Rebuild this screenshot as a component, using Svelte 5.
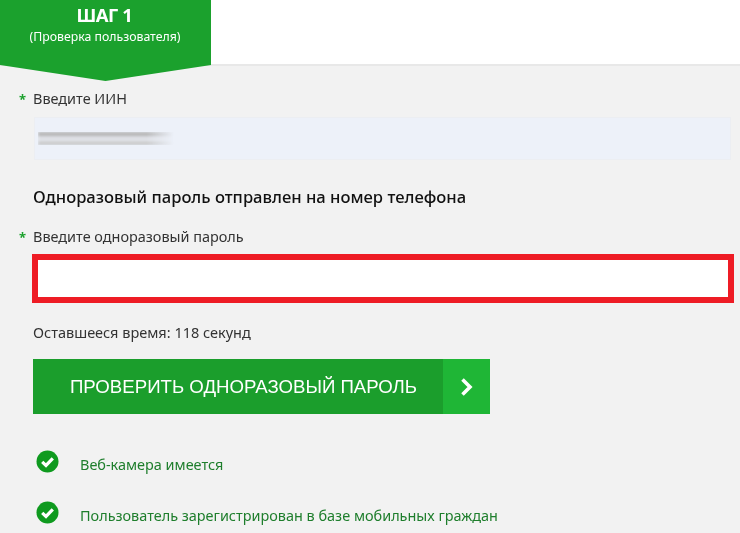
<script>
  const checks = ['Веб-камера имеется', 'Пользователь зарегистрирован в базе мобильных граждан'];
</script>

<div class="page">
  <header class="top">
    <div class="tab">
      <div class="step">ШАГ 1</div>
      <div class="sub">(Проверка пользователя)</div>
    </div>
  </header>

  <main class="form">
    <label class="label first"><span class="star">*</span>Введите ИИН</label>
    <div class="iin"><span class="smear"></span></div>

    <h2 class="notice">Одноразовый пароль отправлен на номер телефона</h2>

    <label class="label"><span class="star">*</span>Введите одноразовый пароль</label>
    <input class="otp" type="text" />

    <p class="time">Оставшееся время: 118 секунд</p>

    <button class="btn" type="button">
      <span class="btn-text">ПРОВЕРИТЬ ОДНОРАЗОВЫЙ ПАРОЛЬ</span>
      <span class="btn-arrow">
        <svg width="14" height="20" viewBox="0 0 14 20"><path d="M2.5 2.5 10 10 2.5 17.5" fill="none" stroke="#fff" stroke-width="3.6"/></svg>
      </span>
    </button>

    <ul class="checks">
      {#each checks as c}
        <li>
          <svg class="ok" width="23" height="23" viewBox="0 0 23 23">
            <circle cx="11.5" cy="11.5" r="11" fill="#0f9a1f"/>
            <path d="M6.2 11.8 10 15.4 16.8 8.4" fill="none" stroke="#fff" stroke-width="3.2"/>
          </svg>
          <span>{c}</span>
        </li>
      {/each}
    </ul>
  </main>
</div>

<style>
  :global(body) { margin: 0; background: #f2f2f2; }
  .page {
    width: 740px; height: 533px; overflow: hidden; background: #f2f2f2;
    font-family: "Noto Sans", "Open Sans", sans-serif; color: #333;
    filter: blur(0.3px);
  }
  .top { height: 64px; background: #fff; border-bottom: 2px solid #e8e8e8; }
  .tab {
    position: relative; width: 211px; height: 65px; background: #1ba12d; color: #fff;
    text-align: center; box-sizing: border-box;
  }
  .tab::after {
    content: ""; position: absolute; left: 0; top: 65px; width: 211px; height: 16px;
    background: #1ba12d; clip-path: polygon(0 0, 100% 0, 50% 100%);
  }
  .step { font-size: 18.5px; font-weight: 700; line-height: 22px; padding-top: 4px; padding-right: 2px; letter-spacing: -0.5px; }
  .sub { font-size: 12.3px; line-height: 16px; padding-top: 3px; padding-right: 1px; }
  .form { padding: 0 10px 0 33px; }
  .label { display: block; position: relative; font-size: 14.45px; line-height: 18px; color: #333; }
  .label.first { padding-top: 24px; }
  .star { position: absolute; left: -14px; color: #1ba12d; font-size: 13px; font-weight: 700; }
  .iin {
    height: 43px; margin-top: 9px; margin-left: 1px; background: #edf1f9; border: 1px solid #eceef2;
    box-sizing: border-box; display: flex; align-items: center; width: 697px;
  }
  .smear {
    display: block; width: 136px; height: 13px; margin-left: 3px; filter: blur(1.5px);
    background: linear-gradient(#b4b4b4 0 30%, #dfe1e6 30% 75%, #c4c4c4 75% 100%);
    mask-image: linear-gradient(90deg, #000 80%, transparent);
  }
  .notice { margin: 27px 0 0; font-size: 16.6px; line-height: 20px; font-weight: 500; color: #111; }
  .notice + .label { margin-top: 21px; }
  .otp {
    display: block; width: 702px; height: 49px; margin: 8px 0 0 -1px; box-sizing: border-box;
    border: 6px solid #ee1c25; background: #fff; outline: none; padding: 0;
  }
  .time { margin: 19px 0 0; font-size: 14.5px; line-height: 20px; color: #333; }
  .btn {
    display: flex; align-items: stretch; width: 457px; height: 55px; margin-top: 17px; padding: 0;
    border: 0; background: #1b9e2c; color: #fff; font-family: "Liberation Sans", Arial, sans-serif;
  }
  .btn-text { flex: 1; font-size: 18.65px; line-height: 55px; text-align: center; padding-left: 11px; }
  .btn-arrow { width: 47px; background: #1fb636; display: flex; align-items: center; justify-content: center; }
  .checks { list-style: none; margin: 36px 0 0; padding: 0; }
  .checks li { display: flex; align-items: center; height: 23px; margin-bottom: 28px; font-size: 14.45px; color: #1e7e2c; }
  .checks li span { position: relative; top: 3px; }
  .ok { margin: 0 21px 0 3px; flex: none; }
</style>
